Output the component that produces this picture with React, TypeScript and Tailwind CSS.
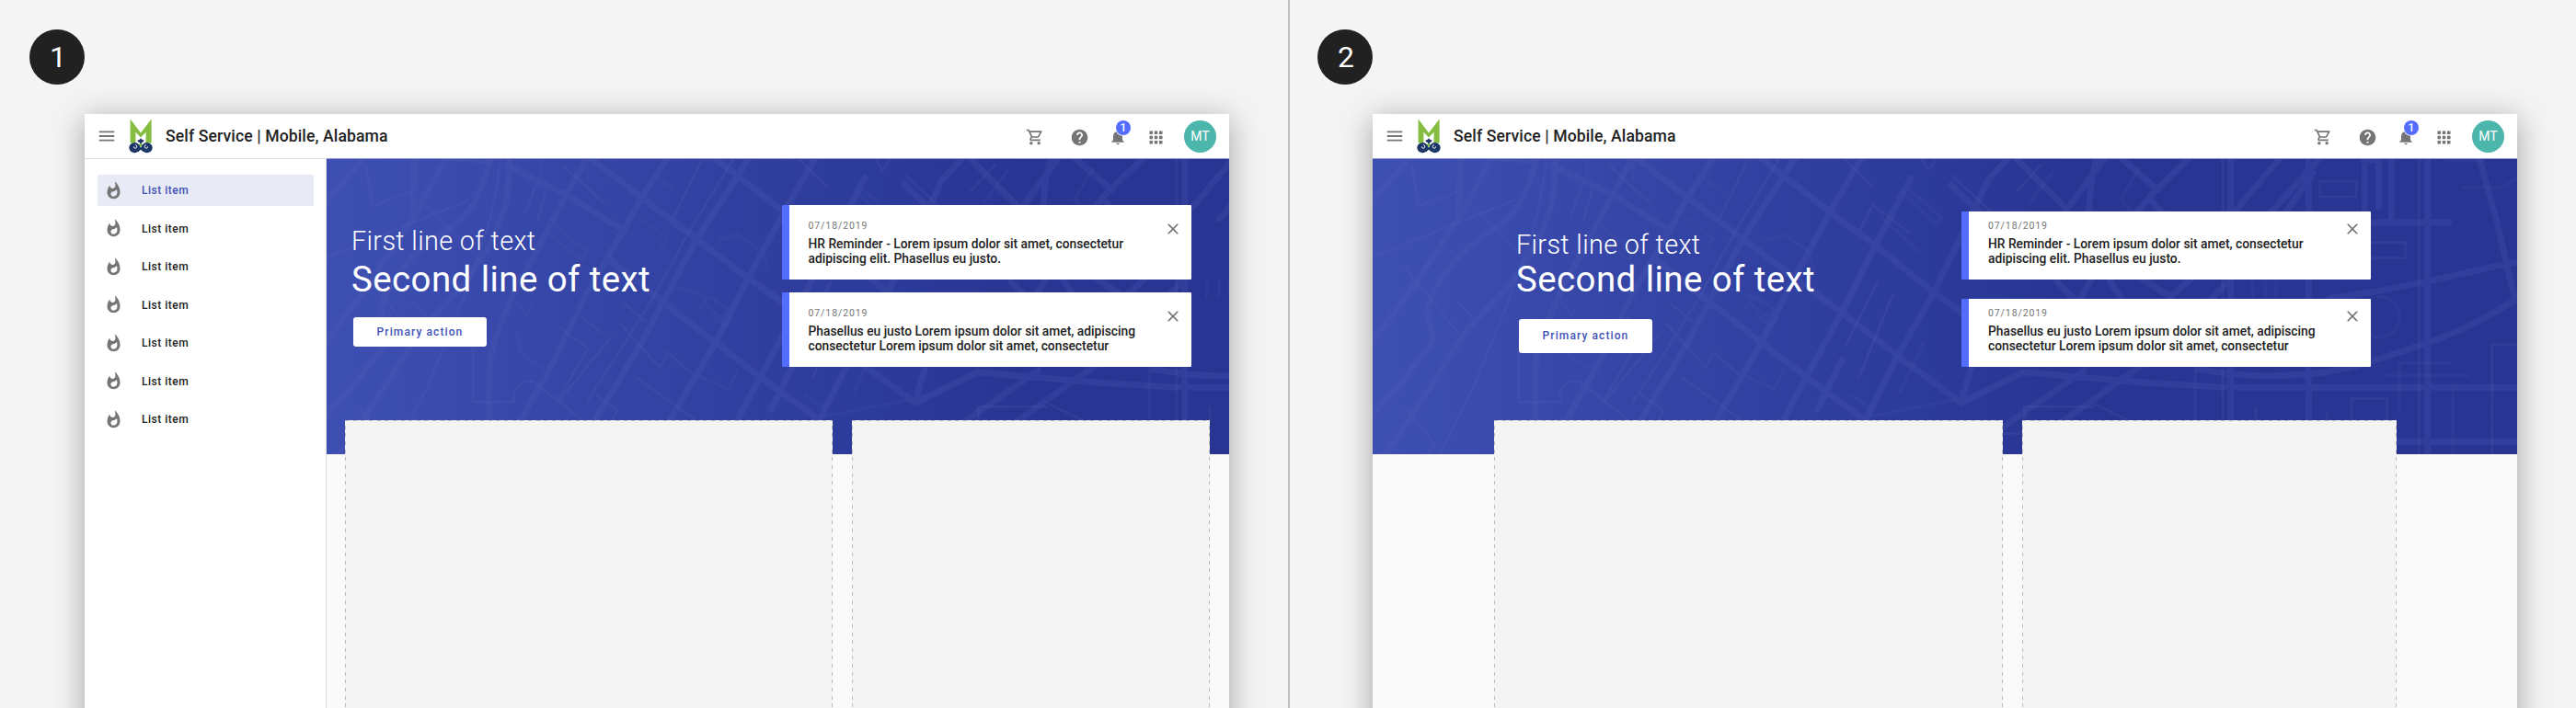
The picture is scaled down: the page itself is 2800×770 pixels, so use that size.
import type { ReactNode } from "react";
import {
  MdApps,
  MdClose,
  MdHelp,
  MdMenu,
  MdNotifications,
  MdOutlineShoppingCart,
  MdWhatshot,
} from "react-icons/md";

const majorRoads = [
  "M-10 147L122 -5",
  "M286 0L280 185",
  "M390 -5L280 194L141 404L-4 600",
  "M536 -5Q520 60 494 114Q470 170 430 204Q390 234 343 264Q280 310 242 364Q190 430 179 494L198 594L90 734L-4 838",
  "M597 0Q594 90 583 150Q560 230 520 300L456 400L305 560L191 740L40 965",
  "M850 -5L782 116L620 420Q560 540 535 640Q526 740 532 860",
  "M590 24L782 116L972 235",
  "M1112 -5L1027 126L972 225L842 450L740 660L628 860",
  "M858 -5L1027 126L1207 261L1375 388L1530 500L1712 642L1918 795",
  "M1378 -5L1340 55L1207 261L1100 460L1027 600L872 855",
  "M1594 -5L1490 176L1375 388L1270 595L1115 860",
  "M1755 62L1640 280L1530 500L1415 710L1335 860",
  "M1262 -5L1340 55L1490 172L1640 282L1830 435L1925 505",
  "M925 330L1096 466L1270 600L1412 710L1610 855",
  "M2074 -5L2005 70L1950 190L1830 435L1712 642L1605 855",
  "M1885 85L2050 240",
  "M1530 655L1450 818",
  "M1918 795L1955 670M1918 795L2125 695L2232 705L2500 728L2772 745H3740",
  "M2320 690L2055 875M2540 650L2245 860",
  "M2690 685Q2860 715 2990 705Q3130 700 3232 668Q3370 625 3480 585Q3620 530 3740 450",
  "M3120 455Q3300 430 3432 400L3740 333",
  "M3608 -5L3665 200L3722 445",
  "M2798 0V970M3052 0V970M3440 0V970",
  "M2388 -5L2215 230M2362 -5Q2340 60 2335 190",
  "M2095 -5L2250 150M2438 -5L2560 100M2665 -5L2545 110L2470 200M2532 130L2610 210",
  "M2960 -5L2800 185M3090 -5L2910 195M3066 45L2960 200",
  "M2232 400L2300 470L2345 390M2400 390L2450 470M2510 390L2600 450L2670 390M2790 400L2720 470",
  "M3235 0V195M3280 0V158M3235 3H3280M3322 0V200M3240 207H3510",
  "M3330 922H3740",
];

const minorRoads = [
  "M127 18L150 153L272 109",
  "M-4 322L150 260L462 134",
  "M410 4L530 10",
  "M109 359L280 569M280 469L324 514M109 814L204 934L180 962",
  "M566 -5Q556 120 520 240L440 470L330 740L220 962",
  "M477 600V793H615Q605 760 625 740Q660 705 700 745L835 852",
  "M772 21L902 141M682 86L647 181M717 101L687 201",
  "M1222 6L1132 191M1326 0L1180 240L1060 460L960 620L850 790",
  "M927 581L757 791M1007 711L1202 851M957 536L1087 681L1112 631L1192 701",
  "M972 471L1042 531M832 516L897 566M762 551L852 616L752 791M867 761L947 821L932 855",
  "M1645 400L1545 605M1695 445L1585 715M1540 0L1630 90M1790 0L1812 36L1838 0",
  "M1630 150L1590 230M1630 150L1750 240",
  "M1890 55L2020 175M2180 20L2100 105",
  "M2772 0V970M3412 0V970",
  "M3089 73H3207V123H3089ZM3200 272H3367V323H3200Z",
  "M3650 970V605H3740M3192 860V782H3308V860",
  "M2357 800L2470 855M2125 855V808H2350M2880 810V855M3112 832V855M2020 895H2110",
];

const faintRoads = [
  "M322 146L500 330M622 571L632 631L702 681",
  "M748 220L850 300L835 330L730 250M620 470L650 510L670 480",
  "M1080 60L1130 100M1020 190L1110 260L1090 290",
  "M1280 265L1340 245L1420 300L1440 360M1230 470L1290 520L1310 490L1250 450",
  "M1255 510L1300 545L1320 515M1150 420L1240 450L1215 490",
  "M1730 110L1840 215L1855 190L1750 100M1660 190L1780 300",
  "M1795 600L1720 760M1612 842L1900 785M1560 770L1620 810M1220 711L1310 750L1340 690",
  "M2220 40L2145 140M2500 30L2440 130L2470 170",
  "M2682 690V850M2870 400V450M2910 400V450M2945 400V450",
  "M3552 93H3680L3740 60M3500 5H3620",
  "M3280 450A62 66 0 1 1 3250 570",
  "M3349 820V665H3512M3302 706H3572M3522 750V970",
  "M850 20V70M700 0V50",
];

function StreetMap() {
  return (
    <svg
      className="absolute left-0 top-0 h-[322px] w-[1244px]"
      viewBox="0 0 3732 966"
      fill="none"
      strokeLinejoin="round"
      strokeLinecap="round"
    >
      <path d={majorRoads.join("")} stroke="#5361b4" strokeOpacity=".23" strokeWidth="21" />
      <path d={minorRoads.join("")} stroke="#5361b4" strokeOpacity=".21" strokeWidth="8" />
      <path d={faintRoads.join("")} stroke="#5361b4" strokeOpacity=".12" strokeWidth="11" />
    </svg>
  );
}

function CityLogo() {
  return (
    <svg className="h-[38px] w-[26px]" viewBox="0 0 26 38">
      <path d="M1.6 .5L13 15.4 24.6 .5V26.5H18.6V14.8L13 20.4 7.4 14.8V26.5H1.6Z" fill="#84bd3f" />
      <path d="M11.2 27.5h3.6v3h-3.6z" fill="#84bd3f" />
      <path
        d="M13 21.2l1.5 1.7 2.1.7-.9 1.9-1.6.5-.4 1.4h-1.4l-.4-1.4-1.6-.5-.9-1.9 2.1-.7z"
        fill="#1d3766"
      />
      <ellipse cx="6.3" cy="31.6" rx="6" ry="5.6" fill="#1d3766" />
      <ellipse cx="19.7" cy="31.6" rx="6" ry="5.6" fill="#1d3766" />
      <path d="M9.4 34.2l3.6-3.4 3.6 3.4-1 1.8-2.6-2.2-2.6 2.2z" fill="#1d3766" />
      <path
        d="M5.4 30.4q0 2 1.8 1.9 1.9-.3 1.6-2.2-.4-1.3-1.7-1.6M20.6 30.4q0 2-1.8 1.9-1.9-.3-1.6-2.2.4-1.3 1.7-1.6"
        fill="none"
        stroke="#fff"
        strokeWidth=".9"
      />
    </svg>
  );
}

function Header() {
  return (
    <header className="flex h-12 shrink-0 items-center bg-white pl-[13px] pr-[14px] text-[#757575]">
      <MdMenu className="size-[22px]" />
      <div className="ml-[13px]">
        <CityLogo />
      </div>
      <h1 className="ml-[14px] text-[17.6px] font-medium tracking-[0.11px] text-[#212121]">
        Self Service | Mobile, Alabama
      </h1>
      <div className="ml-auto flex items-center">
        <MdOutlineShoppingCart className="mt-0.5 size-5" />
        <MdHelp className="ml-[28px] mt-0.5 size-[21px]" />
        <div className="relative ml-[21px] mt-0.5">
          <MdNotifications className="size-5" />
          <span className="absolute -top-[8px] left-[8px] flex size-4 items-center justify-center rounded-full bg-[#536dfe] text-[12px] font-medium leading-none text-white ring-1 ring-white">
            1
          </span>
        </div>
        <MdApps className="ml-[21px] mt-0.5 size-[21px]" />
        <span className="ml-[20px] flex size-[35px] items-center justify-center rounded-full bg-[#4db6ac] text-[14px] text-white">
          MT
        </span>
      </div>
    </header>
  );
}

function Sidebar() {
  return (
    <nav className="flex w-[263px] shrink-0 flex-col gap-[7.5px] border-r border-t border-[#e0e0e0] bg-white pl-[14px] pr-[13px] pt-[17px]">
      {[0, 1, 2, 3, 4, 5, 6].map((i) => (
        <div
          key={i}
          className={
            i === 0
              ? "flex h-[34px] items-center rounded-[2px] bg-[#e8eaf6] pl-[6.5px] text-[#3f51b5]"
              : "flex h-[34px] items-center rounded-[2px] pl-[6.5px] text-[#212121]"
          }
        >
          <MdWhatshot className="size-[21px] text-[#757575]" />
          <span className="ml-[20.5px] text-[12px] font-medium tracking-[0.5px]">List item</span>
        </div>
      ))}
    </nav>
  );
}

function Notice({ compact, children }: { compact: boolean; children: ReactNode }) {
  return (
    <article
      className={
        compact
          ? "flex h-[74px] rounded-[1px] border-l-8 border-[#536dfe] bg-white pl-[21px] pt-[8px]"
          : "flex h-[81px] rounded-[1px] border-l-8 border-[#536dfe] bg-white pl-[21px] pt-[15px]"
      }
    >
      <div className="flex-1 whitespace-nowrap">
        <p className="text-[10.5px] leading-4 tracking-[0.9px] text-[#757575]">07/18/2019</p>
        <p className="mt-[3px] text-[13.8px] font-medium leading-[16.4px] text-[#212121]">{children}</p>
      </div>
      <MdClose className="mr-[10px] mt-[1px] size-5 text-[#757575]" />
    </article>
  );
}

function Notices({ compact }: { compact: boolean }) {
  return (
    <div className={compact ? "flex w-[445px] flex-col gap-[20.5px]" : "flex w-[445px] flex-col gap-[13.5px]"}>
      <Notice compact={compact}>
        HR Reminder - Lorem ipsum dolor sit amet, consectetur
        <br />
        adipiscing elit. Phasellus eu justo.
      </Notice>
      <Notice compact={compact}>
        Phasellus eu justo Lorem ipsum dolor sit amet, adipiscing
        <br />
        consectetur Lorem ipsum dolor sit amet, consectetur
      </Notice>
    </div>
  );
}

function Placeholder({ className }: { className: string }) {
  return (
    <div className={className + " flex flex-col bg-[#f4f4f4]"}>
      <div className="h-px bg-[repeating-linear-gradient(90deg,#c2c2c8_0_4px,#f4f4f4_4px_8.65px)]" />
      <div className="flex flex-1 justify-between">
        <div className="w-px bg-[repeating-linear-gradient(180deg,#f4f4f4_0_4.65px,#bdbdbd_4.65px_8.65px)]" />
        <div className="w-px bg-[repeating-linear-gradient(180deg,#f4f4f4_0_4.65px,#bdbdbd_4.65px_8.65px)]" />
      </div>
    </div>
  );
}

function DrawerOpenPage() {
  return (
    <div className="flex min-h-0 flex-1">
      <Sidebar />
      <main className="flex min-w-0 flex-1 flex-col bg-[#fafafa]">
        <section className="relative h-[322px] shrink-0 overflow-hidden border-t border-[#8f97cc] bg-[linear-gradient(90deg,#3d4fb2_0px,#283593_760px)] text-white">
          <StreetMap />
          <div className="relative flex pl-[27px] pr-[41.5px] pt-[50px]">
            <div className="flex flex-1 flex-col items-start pt-[21px]">
              <p className="text-[28.8px] font-light leading-[36px] tracking-[0.35px]">First line of text</p>
              <p className="mt-[1px] text-[38.4px] leading-[46px] tracking-[0.45px]">Second line of text</p>
              <button className="ml-[2px] mt-[18px] h-[31.5px] w-[145px] rounded-[3px] bg-white text-[12px] font-medium tracking-[1.1px] text-[#3f51b5]">
                Primary action
              </button>
            </div>
            <Notices compact={false} />
          </div>
        </section>
        <div className="relative -mt-[37px] flex flex-1 gap-[21px] pl-5 pr-[21px]">
          <Placeholder className="w-[530px]" />
          <Placeholder className="flex-1" />
        </div>
      </main>
    </div>
  );
}

function DrawerClosedPage() {
  return (
    <main className="flex min-h-0 flex-1 flex-col bg-[#fafafa]">
      <section className="relative h-[321.5px] shrink-0 overflow-hidden border-t border-[#8f97cc] bg-[linear-gradient(90deg,#3d4fb2_0px,#283593_760px)] text-white">
        <StreetMap />
        <div className="relative flex pl-[156px] pr-[159px] pt-[57px]">
          <div className="flex flex-1 flex-col items-start pt-[18px]">
            <p className="text-[28.8px] font-light leading-[36px] tracking-[0.35px]">First line of text</p>
            <p className="-mt-[3px] text-[38.4px] leading-[46px] tracking-[0.45px]">Second line of text</p>
            <button className="ml-[3px] mt-[20px] h-[36.5px] w-[145px] rounded-[3px] bg-white text-[12px] font-medium tracking-[1.1px] text-[#3f51b5]">
              Primary action
            </button>
          </div>
          <Notices compact />
        </div>
      </section>
      <div className="relative -mt-[37px] flex flex-1 gap-[21px] pl-[132px] pr-[131px]">
        <Placeholder className="w-[553px]" />
        <Placeholder className="flex-1" />
      </div>
    </main>
  );
}

function Example({ label, children }: { label: string; children: ReactNode }) {
  return (
    <section className="flex h-full flex-1 flex-col pl-8 pt-8">
      <div className="flex size-[60px] shrink-0 items-center justify-center rounded-full bg-[#212121] pl-0.5 text-[32px] leading-none text-white">
        {label}
      </div>
      <div className="ml-[60px] mt-8 flex h-[700px] w-[1244px] shrink-0 flex-col bg-white shadow-[0_6px_32px_rgba(0,0,0,0.34)]">
        <Header />
        {children}
      </div>
    </section>
  );
}

export default function App() {
  return (
    <div className="flex h-[770px] w-[2800px] overflow-hidden bg-[#f4f4f4] font-['Roboto',sans-serif]">
      <div className="flex h-full w-[1400px] overflow-hidden">
        <Example label="1">
          <DrawerOpenPage />
        </Example>
      </div>
      <div className="relative flex h-full w-[1400px] overflow-hidden">
        <div className="absolute left-0 top-0 h-full w-0.5 bg-[#bdbdbd]" />
        <Example label="2">
          <DrawerClosedPage />
        </Example>
      </div>
    </div>
  );
}
